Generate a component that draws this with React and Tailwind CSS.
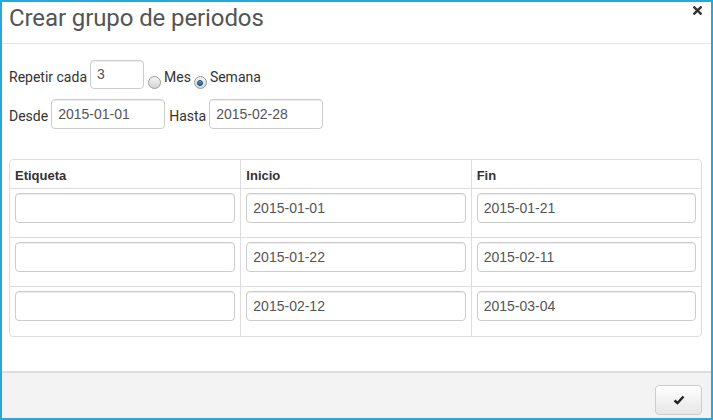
import React from "react";

const rows = [
    { inicio: "2015-01-01", fin: "2015-01-21" },
    { inicio: "2015-01-22", fin: "2015-02-11" },
    { inicio: "2015-02-12", fin: "2015-03-04" },
];

function TextBox({ value, className = "" }) {
    return (
        <div
            className={`h-[29px] border border-[#cccccc] rounded-[4px] bg-white shadow-[inset_0_1px_1px_rgba(0,0,0,0.075)] px-[6px] flex items-center text-[14px] text-[#555555] ${className}`}
        >
            {value}
        </div>
    );
}

function Radio({ checked }) {
    return (
        <span className="w-[13px] h-[13px] rounded-full border border-[#9a9a9a] bg-gradient-to-b from-[#f4f4f4] to-[#d4d4d4] flex items-center justify-center">
            {checked && (
                <span className="w-[6px] h-[6px] rounded-full bg-gradient-to-b from-[#5aa0d8] to-[#1b5e9e] border border-[#164a7a]" />
            )}
        </span>
    );
}

const label = "font-['Roboto',sans-serif] text-[14px]";

export default function App() {
    return (
        <div className="w-[713px] h-[420px] border-2 border-[#27a7da] bg-white flex flex-col font-['Liberation_Sans',Arial,sans-serif] text-[#333333]">
            {/* header */}
            <div className="h-[42px] border-b border-[#e5e5e5] flex justify-between pl-[7px] pr-[9px] shrink-0">
                <h1 className="font-['Roboto',sans-serif] text-[24px] leading-[28px] pt-[2px] text-[#555555] tracking-[-0.1px]">
                    Crear grupo de periodos
                </h1>
                <svg width="9" height="9" viewBox="0 0 10 10" className="mt-[4px]">
                    <path d="M1.5 1.5 L8.5 8.5 M8.5 1.5 L1.5 8.5" stroke="#333" strokeWidth="2.6" strokeLinecap="square" />
                </svg>
            </div>

            {/* body */}
            <div className="pl-[7px] pr-[9px] pt-[16px] flex-1">
                <div className="flex items-center h-[29px]">
                    <span className={`${label} mt-[6px]`}>Repetir cada</span>
                    <div className="ml-[3px] w-[54px] h-[29px] border border-[#cccccc] rounded-[4px] shadow-[inset_0_1px_1px_rgba(0,0,0,0.075)] px-[6px] pt-[3px] text-[14px] text-[#555555]">
                        3
                    </div>
                    <span className="ml-[4px] mt-[16px]"><Radio /></span>
                    <span className={`${label} ml-[3px] mt-[6px]`}>Mes</span>
                    <span className="ml-[3px] mt-[16px]"><Radio checked /></span>
                    <span className={`${label} ml-[3px] mt-[6px]`}>Semana</span>
                </div>

                <div className="flex items-center mt-[10px]">
                    <span className={`${label} mt-[5px]`}>Desde</span>
                    <TextBox value="2015-01-01" className="ml-[3px] w-[114px] h-[30px]" />
                    <span className={`${label} ml-[4px] mt-[5px]`}>Hasta</span>
                    <TextBox value="2015-02-28" className="ml-[3px] w-[114px] h-[30px]" />
                </div>

                <div className="mt-[30px] border border-[#dddddd] rounded-[4px] overflow-hidden">
                    <div className="grid grid-cols-3 h-[29px] border-b border-[#dddddd] text-[13px] font-bold">
                        <div className="px-[5px] pt-[6px]">Etiqueta</div>
                        <div className="px-[5px] pt-[6px] border-l border-[#dddddd]">Inicio</div>
                        <div className="px-[5px] pt-[6px] border-l border-[#dddddd]">Fin</div>
                    </div>
                    {rows.map((r, i) => (
                        <div
                            key={i}
                            className={`grid grid-cols-3 h-[49px] ${i < rows.length - 1 ? "border-b border-[#dddddd]" : ""}`}
                        >
                            <div className="px-[5px] pt-[4px]">
                                <TextBox value="" className="h-[30px]" />
                            </div>
                            <div className="px-[5px] pt-[4px] border-l border-[#dddddd]">
                                <TextBox value={r.inicio} className="h-[30px]" />
                            </div>
                            <div className="px-[5px] pt-[4px] border-l border-[#dddddd]">
                                <TextBox value={r.fin} className="h-[30px]" />
                            </div>
                        </div>
                    ))}
                </div>
            </div>

            {/* footer */}
            <div className="h-[47px] shrink-0 border-t-2 border-[#dddddd] bg-[#f3f3f3] flex justify-end items-start pt-[12px] pr-[9px]">
                <button className="w-[47px] h-[30px] rounded-[4px] border border-[#cccccc] bg-gradient-to-b from-white to-[#e6e6e6] flex items-center justify-center">
                    <svg width="12" height="10" viewBox="0 0 12 10">
                        <path d="M1.5 5.5 L4.5 8 L10.5 1.5" stroke="#222" strokeWidth="2.4" fill="none" />
                    </svg>
                </button>
            </div>
        </div>
    );
}
